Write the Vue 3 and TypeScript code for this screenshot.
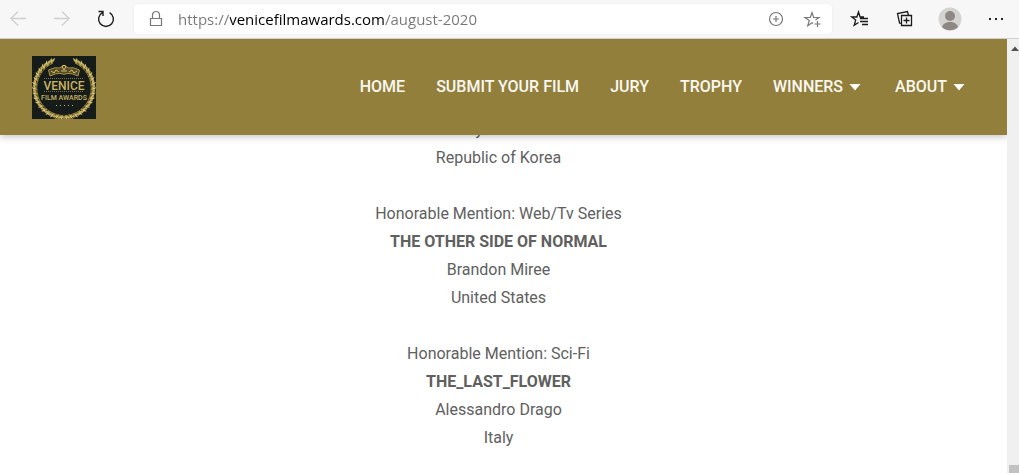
<script setup lang="ts">
import { ref } from 'vue'

interface NavItem {
  label: string
  menu?: boolean
}

interface Award {
  category?: string
  title?: string
  people: string[]
}

interface Leaf {
  x: number
  y: number
  angle: number
}

const url = ref('https://venicefilmawards.com/august-2020')

const nav: NavItem[] = [
  { label: 'HOME' },
  { label: 'SUBMIT YOUR FILM' },
  { label: 'JURY' },
  { label: 'TROPHY' },
  { label: 'WINNERS', menu: true },
  { label: 'ABOUT', menu: true },
]

const awards: Award[] = [
  { people: ['Hyun Kim', 'Republic of Korea'] },
  {
    category: 'Honorable Mention: Web/Tv Series',
    title: 'THE OTHER SIDE OF NORMAL',
    people: ['Brandon Miree', 'United States'],
  },
  {
    category: 'Honorable Mention: Sci-Fi',
    title: 'THE_LAST_FLOWER',
    people: ['Alessandro Drago', 'Italy'],
  },
]

// Leaves of the right laurel branch, from its tip down to the stem.
const leaves: Leaf[] = Array.from({ length: 17 }, (_, i) => {
  const deg = 24 + i * 9.4
  const rad = (deg * Math.PI) / 180
  return { x: 27.5 * Math.sin(rad), y: -27.5 * Math.cos(rad), angle: deg }
})
</script>

<template>
  <div class="window">
    <div class="toolbar">
      <div class="history">
        <button class="tool faint" aria-label="Back">
          <svg width="20" height="20" viewBox="0 0 20 20"><path d="M18 9.500H3M10 2.500l-7 7 7 7" /></svg>
        </button>
        <button class="tool faint" aria-label="Forward">
          <svg width="20" height="20" viewBox="0 0 20 20"><path d="M2 9.500h15M10 2.500l7 7-7 7" /></svg>
        </button>
        <button class="tool reload" aria-label="Refresh">
          <svg width="20" height="20" viewBox="0 0 20 20"><path d="M13.600 3.600a7.400 7.400 0 1 1-7.200 0M2.500 2.500h4.500v4.500" /></svg>
        </button>
      </div>

      <div class="address">
        <svg class="lock" width="20" height="20" viewBox="0 0 20 20">
          <path d="M4.500 9.500h11v7h-11zM6.500 9.500V6a3.500 3.500 0 0 1 7 0v3.500" />
        </svg>
        <input v-model="url" class="url" type="text" aria-label="Address" spellcheck="false" />
        <button class="tool grey" aria-label="Zoom">
          <svg width="20" height="20" viewBox="0 0 20 20">
            <circle cx="10" cy="10" r="6.500" /><path d="M7 10h6M10 7v6" />
          </svg>
        </button>
        <button class="tool grey" aria-label="Add to favorites">
          <svg width="20" height="20" viewBox="0 0 20 20">
            <path d="M11 14.500l-1-.7-4.300 3 1.600-5.200L3 8.500h5.300L10 3.500l1.700 5H17l-3.500 2.600M15.500 12v6M12.500 15h6" />
          </svg>
        </button>
      </div>

      <div class="actions">
        <button class="tool wide" aria-label="Favorites">
          <svg width="24" height="24" viewBox="0 0 24 24">
            <path d="M10.500 15.500l-4.300 2.800 1.500-5.300-4-3h5.200L10.500 5l1.600 5H16M12 11.500h8M12 14.500h8M14 17.500h6" />
          </svg>
        </button>
        <button class="tool wide" aria-label="Collections">
          <svg width="24" height="24" viewBox="0 0 24 24">
            <path d="M8.500 8.500h10v10h-10zM13.500 10.500v6M10.500 13.500h6M8 16.500l-1.500-.5L4.500 6.500l10-2 1 4" />
          </svg>
        </button>
        <button class="tool wide" aria-label="Profile">
          <svg width="24" height="24" viewBox="0 0 24 24">
            <circle class="disc" cx="12" cy="12" r="11.500" />
            <circle class="person" cx="12" cy="9" r="5" />
            <path class="person" d="M4 20c1-3.500 4-5 8-5s7 1.500 8 5a11.300 11.300 0 0 1-16 0z" />
          </svg>
        </button>
        <button class="tool wide" aria-label="Settings and more">
          <svg width="24" height="24" viewBox="0 0 24 24"><path class="dots" d="M6 11h2v2H6zM12 11h2v2h-2zM18 11h2v2h-2z" /></svg>
        </button>
      </div>
    </div>

    <div class="viewport">
      <div class="page">
        <header class="site-header">
          <a class="logo" href="#" aria-label="Venice Film Awards">
            <svg width="64" height="63" viewBox="0 0 64 63">
              <rect width="64" height="63" fill="#151c1a" />
              <g v-for="side in [1, -1]" :key="side" :transform="`translate(32 32) scale(${side} 1)`">
                <path d="M11 -25A27.500 27.500 0 0 1 2 27.500" fill="none" stroke="#8f7d36" stroke-width="1" />
                <g v-for="leaf in leaves" :key="leaf.angle" :transform="`translate(${leaf.x} ${leaf.y}) rotate(${leaf.angle})`">
                  <path d="M2 0Q-2.500 -.5 -4 -3.500Q0 -4 2 0z" fill="#c4ac5a" />
                  <path d="M2 0Q2.500 -3 -.5 -5Q-1 -2 2 0z" fill="#dcc678" />
                  <path d="M1 1Q1 -3 4 -4Q4 -1 1 1z" fill="#a08a3e" />
                </g>
              </g>
              <path d="M16.500 14Q23 10.500 28 12Q32 6.500 36 12Q41 10.500 47.500 14L46 20Q40 17 36 17.500Q32 19 28 17.500Q24 17 18 20z" fill="#544b25" stroke="#a8914a" stroke-width="1" />
              <path d="M19 15l3 2 2-3 3 2M37 16l3-2 2 3 3-2M29 15h6M30 11l2-2 2 2-2 3z" fill="none" stroke="#d6be6c" stroke-width="1" />
              <path d="M12 22.500h40M12 35.500h40" stroke="#777348" stroke-width="1" stroke-dasharray="1 1" />
              <text x="32" y="34" class="logo-name">VENICE</text>
              <text x="32" y="44" class="logo-sub">FILM AWARDS</text>
              <path d="M24 49.500h17" stroke="#c3ad68" stroke-width="1" stroke-dasharray="1 3" />
            </svg>
          </a>
          <nav class="nav">
            <template v-for="item in nav" :key="item.label">
              <button v-if="item.menu" class="nav-item has-menu" aria-haspopup="true">
                {{ item.label }}
                <svg width="12" height="8" viewBox="0 0 12 8"><path d="M.5 1h11L6 7.500z" /></svg>
              </button>
              <a v-else class="nav-item" href="#">{{ item.label }}</a>
            </template>
          </nav>
        </header>

        <main class="awards">
          <section v-for="(award, i) in awards" :key="i" class="award">
            <p v-if="award.category">{{ award.category }}</p>
            <p v-if="award.title"><strong>{{ award.title }}</strong></p>
            <p v-for="line in award.people" :key="line">{{ line }}</p>
          </section>
        </main>
      </div>

      <div class="scrollbar" aria-hidden="true">
        <svg width="8" height="5" viewBox="0 0 8 5"><path d="M0 5l4-4.500L8 5z" /></svg>
        <div class="thumb"></div>
      </div>
    </div>
  </div>
</template>

<style>
body {
  margin: 0;
}
</style>

<style scoped>
.window {
  height: 100vh;
  display: flex;
  flex-direction: column;
  overflow: hidden;
  background: #fff;
  font-family: Roboto, "Liberation Sans", sans-serif;
}

button {
  padding: 0;
  border: 0;
  background: none;
  font: inherit;
  color: inherit;
  cursor: pointer;
}

svg {
  display: block;
}

.toolbar {
  flex: none;
  display: flex;
  align-items: center;
  height: 38px;
  padding: 0 12px 0 8px;
  background: #f7f7f7;
  border-bottom: 1px solid #cfcfcf;
}

.history {
  display: flex;
  gap: 24px;
  margin-right: 18px;
}

.tool {
  flex: none;
  width: 20px;
}

.tool.wide {
  width: 24px;
}

.tool path,
.tool circle,
.lock path {
  fill: none;
  stroke: #1b1b1b;
  stroke-width: 1.3px;
}

.tool.faint path {
  stroke: #cfcfcf;
}

.tool.reload path {
  stroke-width: 1.4px;
}

.tool.grey path,
.tool.grey circle,
.lock path {
  stroke: #777;
  stroke-width: 1.2px;
}

.tool .disc {
  fill: #d5d3cf;
  stroke: none;
}

.tool .person {
  fill: #8d8883;
  stroke: none;
}

.tool .dots {
  fill: #222;
  stroke: none;
}

.address {
  flex: 1;
  min-width: 0;
  display: flex;
  align-items: center;
  gap: 16px;
  height: 30px;
  padding: 0 10px 0 12px;
  border-radius: 4px;
  background: #fff;
  box-shadow: 0 0 2px #e6e6e6;
}

.lock {
  flex: none;
  margin-right: -4px;
}

.url {
  flex: 1;
  min-width: 0;
  padding: 0;
  border: 0;
  outline: 0;
  font: 15px/24px "Open Sans", "Noto Sans", sans-serif;
  color: transparent;
  background: linear-gradient(90deg, #767676 52px, #000 52px, #000 207px, #767676 207px);
  background-clip: text;
  -webkit-background-clip: text;
}

.actions {
  display: flex;
  gap: 21px;
  margin-left: 16px;
}

.viewport {
  flex: 1;
  min-height: 0;
  display: flex;
}

.page {
  flex: 1;
  min-width: 0;
  overflow: hidden;
}

.site-header {
  position: relative;
  z-index: 1;
  display: flex;
  align-items: center;
  justify-content: space-between;
  height: 96px;
  padding: 0 39px 0 32px;
  box-sizing: border-box;
  background: #927f3b;
  box-shadow: 0 1px 8px rgba(0, 0, 0, 0.28);
}

.logo-name,
.logo-sub {
  font-family: Roboto, sans-serif;
  font-weight: 500;
  text-anchor: middle;
  fill: #c9b263;
}

.logo-name {
  font-size: 12px;
}

.logo-sub {
  font-size: 7px;
}

.nav {
  display: flex;
  gap: 31px;
}

.nav-item {
  display: flex;
  align-items: center;
  gap: 6px;
  font-size: 16px;
  font-weight: 500;
  line-height: 24px;
  color: #faf8f2;
  text-decoration: none;
  white-space: nowrap;
}

.nav-item.has-menu {
  padding-right: 3px;
}

.nav-item path {
  fill: #fff;
}

.awards {
  display: flex;
  flex-direction: column;
  gap: 28px;
  margin-top: -19px;
  padding-right: 10px;
  text-align: center;
  font-size: 16px;
  line-height: 28px;
  color: #606060;
}

.award p {
  margin: 0;
}

.award strong {
  font-weight: 700;
}

.scrollbar {
  flex: none;
  width: 12px;
  display: flex;
  flex-direction: column;
  align-items: flex-end;
  justify-content: space-between;
  padding-top: 7px;
  box-sizing: border-box;
  background: #f0f0f0;
  overflow: hidden;
}

.scrollbar path {
  fill: #505050;
}

.thumb {
  width: 10px;
  height: 8px;
  background: #c1c1c1;
}
</style>
